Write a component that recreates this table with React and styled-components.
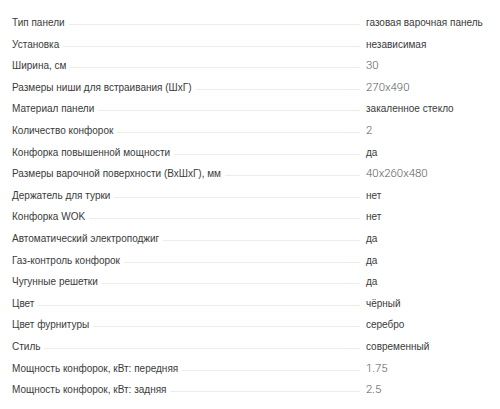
import React from 'react';
import styled, { createGlobalStyle } from 'styled-components';

const GlobalStyle = createGlobalStyle`
  body {
    margin: 0;
    background: #fff;
    font-family: "Liberation Sans", Arial, sans-serif;
  }
`;

const List = styled.dl`
  margin: 0;
  padding: 12px 0 0 12px;
  display: flex;
  flex-direction: column;
`;

const Row = styled.div`
  display: flex;
  align-items: baseline;
  height: 21.6px;
  line-height: 21.6px;
  font-size: 10px;
`;

const Label = styled.dt`
  color: #3a3a3a;
  white-space: nowrap;
`;

const Filler = styled.span`
  flex: 1;
  margin: 0 6px 0 4px;
  border-bottom: 1px solid #ececec;
  position: relative;
  top: -1px;
`;

const Value = styled.dd`
  margin: 0;
  width: 134px;
  color: ${({ $num }) => ($num ? '#5a5a5a' : '#3a3a3a')};
  font-family: ${({ $num }) =>
    $num ? 'Roboto, "Liberation Sans", sans-serif' : '"Liberation Sans", Arial, sans-serif'};
  font-weight: ${({ $num }) => ($num ? 300 : 400)};
  font-size: ${({ $num }) => ($num ? '11.4px' : '10px')};
  white-space: nowrap;
`;

const specs = [
  ['Тип панели', 'газовая варочная панель'],
  ['Установка', 'независимая'],
  ['Ширина, см', '30'],
  ['Размеры ниши для встраивания (ШхГ)', '270x490'],
  ['Материал панели', 'закаленное стекло'],
  ['Количество конфорок', '2'],
  ['Конфорка повышенной мощности', 'да'],
  ['Размеры варочной поверхности (ВхШхГ), мм', '40x260x480'],
  ['Держатель для турки', 'нет'],
  ['Конфорка WOK', 'нет'],
  ['Автоматический электроподжиг', 'да'],
  ['Газ-контроль конфорок', 'да'],
  ['Чугунные решетки', 'да'],
  ['Цвет', 'чёрный'],
  ['Цвет фурнитуры', 'серебро'],
  ['Стиль', 'современный'],
  ['Мощность конфорок, кВт: передняя', '1.75'],
  ['Мощность конфорок, кВт: задняя', '2.5'],
];

const App = () => (
  <>
    <GlobalStyle />
    <List>
      {specs.map(([label, value]) => (
        <Row key={label}>
          <Label>{label}</Label>
          <Filler />
          <Value $num={/^[\d.x]+$/.test(value)}>{value}</Value>
        </Row>
      ))}
    </List>
  </>
);

export default App;
